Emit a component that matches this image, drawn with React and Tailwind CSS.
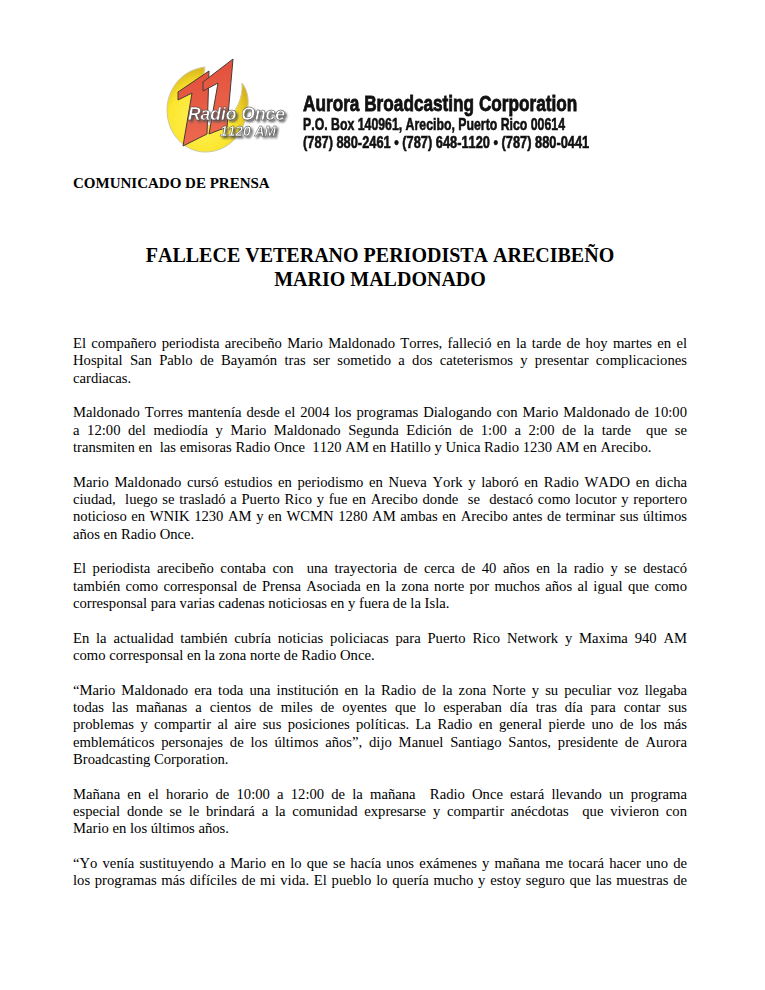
const paragraphs = [
  [
    "El compañero periodista arecibeño Mario Maldonado Torres, falleció en la tarde de hoy martes en el",
    "Hospital San Pablo de Bayamón tras ser sometido a dos cateterismos y presentar complicaciones",
    "cardiacas.",
  ],
  [
    "Maldonado Torres mantenía desde el 2004 los programas Dialogando con Mario Maldonado de 10:00",
    "a 12:00 del mediodía y Mario Maldonado Segunda Edición de 1:00 a 2:00 de la tarde  que se",
    "transmiten en  las emisoras Radio Once  1120 AM en Hatillo y Unica Radio 1230 AM en Arecibo.",
  ],
  [
    "Mario Maldonado cursó estudios en periodismo en Nueva York y laboró en Radio WADO en dicha",
    "ciudad,  luego se trasladó a Puerto Rico y fue en Arecibo donde  se  destacó como locutor y reportero",
    "noticioso en WNIK 1230 AM y en WCMN 1280 AM ambas en Arecibo antes de terminar sus últimos",
    "años en Radio Once.",
  ],
  [
    "El periodista arecibeño contaba con  una trayectoria de cerca de 40 años en la radio y se destacó",
    "también como corresponsal de Prensa Asociada en la zona norte por muchos años al igual que como",
    "corresponsal para varias cadenas noticiosas en y fuera de la Isla.",
  ],
  [
    "En la actualidad también cubría noticias policiacas para Puerto Rico Network y Maxima 940 AM",
    "como corresponsal en la zona norte de Radio Once.",
  ],
  [
    "“Mario Maldonado era toda una institución en la Radio de la zona Norte y su peculiar voz llegaba",
    "todas las mañanas a cientos de miles de oyentes que lo esperaban día tras día para contar sus",
    "problemas y compartir al aire sus posiciones políticas. La Radio en general pierde uno de los más",
    "emblemáticos personajes de los últimos años”, dijo Manuel Santiago Santos, presidente de Aurora",
    "Broadcasting Corporation.",
  ],
  [
    "Mañana en el horario de 10:00 a 12:00 de la mañana  Radio Once estará llevando un programa",
    "especial donde se le brindará a la comunidad expresarse y compartir anécdotas  que vivieron con",
    "Mario en los últimos años.",
  ],
];

const lastParagraph = [
  "“Yo venía sustituyendo a Mario en lo que se hacía unos exámenes y mañana me tocará hacer uno de",
  "los programas más difíciles de mi vida. El pueblo lo quería mucho y estoy seguro que las muestras de",
];

function Logo() {
  const sans = "'Liberation Sans', sans-serif";
  return (
    <svg width="125" height="100" viewBox="0 0 125 100" className="shrink-0">
      <defs>
        <radialGradient id="sun" cx="0.42" cy="0.62" r="0.62">
          <stop offset="0" stopColor="#fff25a" />
          <stop offset="0.65" stopColor="#fbe62e" />
          <stop offset="1" stopColor="#d8b31c" />
        </radialGradient>
        <linearGradient id="red" x1="0" y1="0" x2="0" y2="1">
          <stop offset="0" stopColor="#e2503c" />
          <stop offset="1" stopColor="#ec6a50" />
        </linearGradient>
      </defs>
      <path
        d="M40 11 C15 14 2 35 2 54 C2 78 20 96 40 96 C62 96 80 80 83 50 C84 40 81 32 77 27 C78 42 72 55 60 66 L30 72 Z"
        fill="url(#sun)"
        stroke="#cfc9a0"
        strokeWidth="1"
      />
      <path d="M44 15 L13 36 L13 44 L27 37 L18 90 L42 78 Z" fill="url(#red)" stroke="#4a3a36" strokeWidth="1" strokeLinejoin="round" />
      <path d="M68 3 L38 26 L38 35 L53 27 L44 78 L62 71 Z" fill="url(#red)" stroke="#4a3a36" strokeWidth="1" strokeLinejoin="round" />
      <g fontFamily={sans} fontWeight="700" fontStyle="italic" className="drop-shadow-[2px_2px_1px_#555555]">
        <text x="23" y="64" fontSize="18" textLength="97" lengthAdjust="spacingAndGlyphs" fill="#ffffff" stroke="#333333" strokeWidth="0.4">Radio Once</text>
        <text x="55" y="80" fontSize="14" textLength="56" lengthAdjust="spacingAndGlyphs" fill="#ffffff" stroke="#333333" strokeWidth="0.4">1120 AM</text>
      </g>
    </svg>
  );
}

function Line({ text, last }) {
  return (
    <div className={last ? "whitespace-pre-wrap" : "whitespace-pre-wrap text-justify [text-align-last:justify]"}>
      {text}
    </div>
  );
}

export default function App() {
  return (
    <div className="w-[765px] h-[990px] overflow-hidden bg-white text-black font-['Liberation_Serif',serif] [font-kerning:none]">
      <div className="flex items-start pl-[165px] pt-[56px]">
        <Logo />
        <div className="ml-[13px] mt-[35px] font-['Liberation_Sans',sans-serif] font-bold text-[#111]">
          <div className="text-[22px] leading-[25px] origin-left scale-x-[0.782] whitespace-nowrap [-webkit-text-stroke:0.8px_#111]">
            Aurora Broadcasting Corporation
          </div>
          <div className="text-[17px] leading-[18px] origin-left scale-x-[0.724] whitespace-nowrap [-webkit-text-stroke:0.6px_#111]">
            P.O. Box 140961, Arecibo, Puerto Rico 00614
          </div>
          <div className="text-[17px] leading-[18px] origin-left scale-x-[0.754] whitespace-nowrap [-webkit-text-stroke:0.6px_#111]">
            (787) 880-2461 • (787) 648-1120 • (787) 880-0441
          </div>
        </div>
      </div>

      <div className="pl-[73px] pr-[78px] w-[765px] mt-[19px]">
        <p className="text-[15px] leading-[17px] font-bold">COMUNICADO DE PRENSA</p>

        <h1 className="mt-[51px] text-center text-[20px] leading-[24px] font-bold">
          FALLECE VETERANO PERIODISTA ARECIBEÑO
          <br />
          MARIO MALDONADO
        </h1>

        <div className="mt-[44px] text-[14.67px] leading-[17.33px] flex flex-col gap-[17.33px]">
          {paragraphs.map((lines, i) => (
            <div key={i}>
              {lines.map((line, j) => (
                <Line key={j} text={line} last={j === lines.length - 1} />
              ))}
            </div>
          ))}
          <div>
            {lastParagraph.map((line, j) => (
              <Line key={j} text={line} />
            ))}
          </div>
        </div>
      </div>
    </div>
  );
}
